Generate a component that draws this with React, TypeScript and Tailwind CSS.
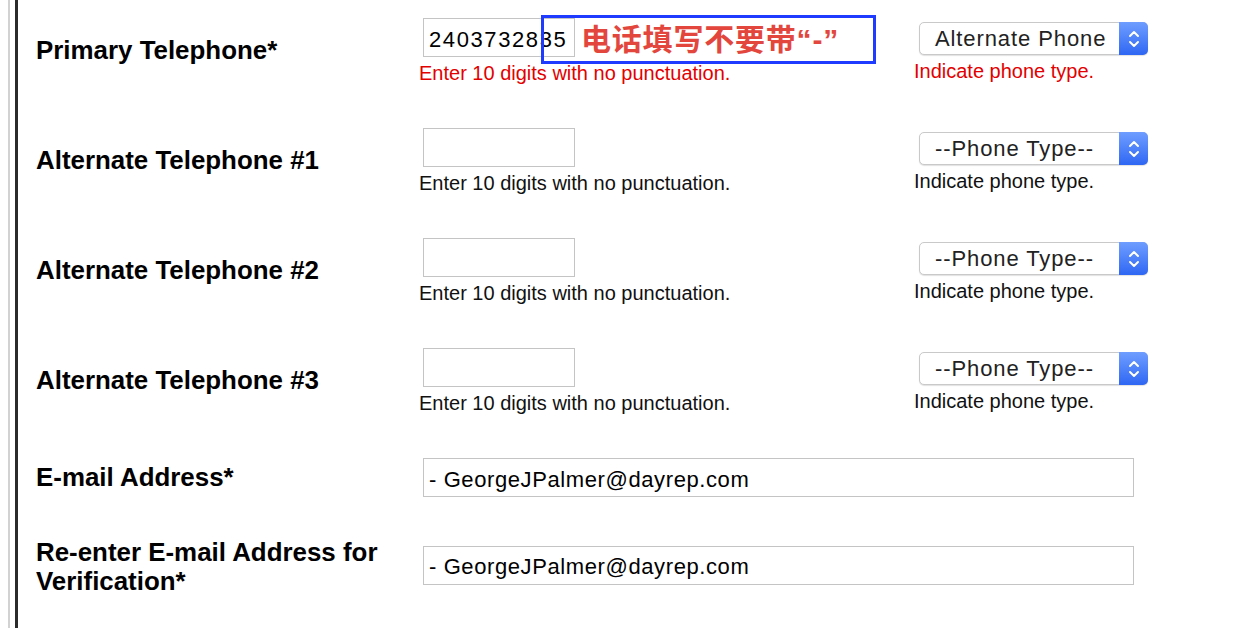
import type { ReactNode } from 'react';

const sans = "font-['Liberation_Sans',Arial,sans-serif]";

interface PhoneRow {
  label: string;
  value: string;
  type: string;
  error: boolean;
}

const phoneRows: PhoneRow[] = [
  { label: 'Primary Telephone*', value: '2403732835', type: 'Alternate Phone', error: true },
  { label: 'Alternate Telephone #1', value: '', type: '--Phone Type--', error: false },
  { label: 'Alternate Telephone #2', value: '', type: '--Phone Type--', error: false },
  { label: 'Alternate Telephone #3', value: '', type: '--Phone Type--', error: false },
];

function Label({ children }: { children: ReactNode }) {
  return (
    <div className={`w-[383px] shrink-0 text-[25.9px] leading-[29px] font-bold text-black ${sans}`}>
      {children}
    </div>
  );
}

function FakeSelect({ value }: { value: string }) {
  return (
    <div className="ml-[5px] flex h-[33px] w-[229px] rounded-[5px] border border-[#c9c9c9] bg-white shadow-[0_1px_1px_rgba(0,0,0,0.12)]">
      <div className={`flex flex-1 items-center pl-[15px] text-[22px] tracking-[0.9px] text-[#222] ${sans}`}>{value}</div>
      <div className="-my-px -mr-px flex w-[29px] flex-col items-center justify-center rounded-r-[5px] bg-gradient-to-b from-[#6f9dff] to-[#2f66f3]">
        <svg width="14" height="22" viewBox="0 0 14 22" fill="none" stroke="white" strokeWidth="2" strokeLinecap="round" strokeLinejoin="round">
          <path d="M3 8 L7 4 L11 8" />
          <path d="M3 14 L7 18 L11 14" />
        </svg>
      </div>
    </div>
  );
}

export default function App() {
  return (
    <div className="relative h-[628px] w-[1256px] overflow-hidden bg-white">
      <div className="flex h-full pl-[8px]">
        <div className="h-full border-l-2 border-[#d2d2d2] pl-[5px]">
          <div className="h-full border-l-[3px] border-[#2b2b2b] pl-[18px] pt-[18px]">
            {phoneRows.map((row) => (
              <div key={row.label} className="mb-[44px] flex h-[66px] items-center">
                <div className="-mt-[2px]">
                  <Label>{row.label}</Label>
                </div>
                <div className="w-[495px] shrink-0 self-start">
                  <input
                    readOnly
                    defaultValue={row.value}
                    className={`ml-[4px] block h-[39px] w-[152px] border border-[#c4c4c4] bg-white pl-[5px] pt-[4px] text-[22px] tracking-[1.6px] text-black outline-none ${sans}`}
                  />
                  <div className={`mt-[5px] text-[20px] leading-[23px] ${row.error ? 'text-[#e30000]' : 'text-[#111]'} ${sans}`}>
                    Enter 10 digits with no punctuation.
                  </div>
                </div>
                <div className="self-start pt-[4px]">
                  <FakeSelect value={row.type} />
                  <div className={`mt-[5px] text-[20px] leading-[23px] ${row.error ? 'text-[#e30000]' : 'text-[#111]'} ${sans}`}>
                    Indicate phone type.
                  </div>
                </div>
              </div>
            ))}

            <div className="flex items-center">
              <Label>E-mail Address*</Label>
              <input
                readOnly
                defaultValue="- GeorgeJPalmer@dayrep.com"
                className={`ml-[4px] block h-[39px] w-[711px] border border-[#c4c4c4] bg-white pl-[5px] pt-[4px] text-[22px] tracking-[0.6px] text-black outline-none ${sans}`}
              />
            </div>

            <div className="mt-[37px] flex items-center">
              <div className="pt-[4px]">
                <Label>
                  Re-enter E-mail Address for
                  <br />
                  Verification*
                </Label>
              </div>
              <input
                readOnly
                defaultValue="- GeorgeJPalmer@dayrep.com"
                className={`ml-[4px] block h-[39px] w-[711px] border border-[#c4c4c4] bg-white pl-[5px] pt-[4px] text-[22px] tracking-[0.6px] text-black outline-none ${sans}`}
              />
            </div>
          </div>
        </div>
      </div>

      {/* annotation overlay */}
      <div className="absolute left-[541px] top-[15px] flex h-[49px] w-[335px] items-center border-[3px] border-[#1f3bff] pl-[37px]">
        <span className="font-['Liberation_Sans','Noto_Sans_CJK_SC',sans-serif] text-[30px] leading-none font-bold tracking-[0.8px] text-[#e2463d]">
          电话填写不要带“-”
        </span>
      </div>
    </div>
  );
}
